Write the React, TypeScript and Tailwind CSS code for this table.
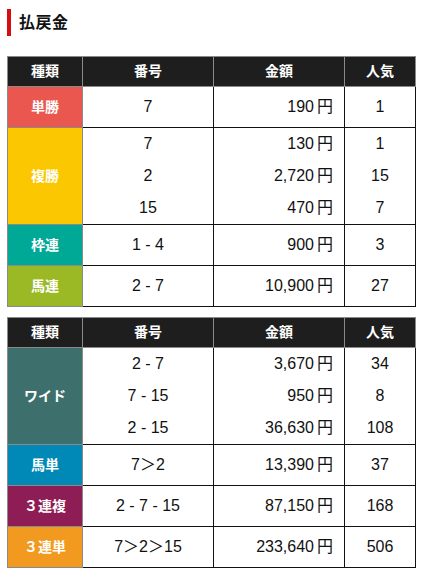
const tables = [
  [
    { label: "単勝", color: "bg-[#e9574f]", rows: [["7", "190", "1"]] },
    { label: "複勝", color: "bg-[#fbc700]", rows: [["7", "130", "1"], ["2", "2,720", "15"], ["15", "470", "7"]] },
    { label: "枠連", color: "bg-[#00a995]", rows: [["1 - 4", "900", "3"]] },
    { label: "馬連", color: "bg-[#9bb924]", rows: [["2 - 7", "10,900", "27"]] },
  ],
  [
    { label: "ワイド", color: "bg-[#3d706d]", rows: [["2 - 7", "3,670", "34"], ["7 - 15", "950", "8"], ["2 - 15", "36,630", "108"]] },
    { label: "馬単", color: "bg-[#0089b7]", rows: [["7＞2", "13,390", "37"]] },
    { label: "３連複", color: "bg-[#8e1d55]", rows: [["2 - 7 - 15", "87,150", "168"]] },
    { label: "３連単", color: "bg-[#f29a20]", rows: [["7＞2＞15", "233,640", "506"]] },
  ],
];

type Bet = { label: string; color: string; rows: string[][] };

function Lines({ bet, col }: { bet: Bet; col: number }) {
  const multi = bet.rows.length > 1;
  return (
    <div className="flex flex-col border-r border-b border-[#111]">
      {bet.rows.map((r, i) => (
        <div
          key={i}
          className={`flex items-center ${multi ? "h-[32px]" : "h-[40px]"} ${
            col === 1 ? "justify-end pr-[11px]" : "justify-center"
          }`}
        >
          {r[col]}
          {col === 1 && <span className="ml-[3px]">円</span>}
        </div>
      ))}
    </div>
  );
}

function PayTable({ bets }: { bets: Bet[] }) {
  return (
    <div className="grid grid-cols-[76px_131px_131px_71px] w-[409px] text-[16px] text-[#111]">
      {["種類", "番号", "金額", "人気"].map((h, i) => (
        <div
          key={h}
          className={`h-[31px] flex items-center justify-center bg-[#1e1e1e] text-white font-bold text-[14px] border-t border-r border-b border-[#8a8a8a] ${
            i === 0 ? "border-l" : ""
          }`}
        >
          {h}
        </div>
      ))}
      {bets.map((b) => (
        <div key={b.label} className="contents">
          <div
            className={`${b.color} flex items-center justify-center text-white font-bold text-[14px] border-l border-r border-b border-[#8a8a8a]`}
          >
            {b.label}
          </div>
          <Lines bet={b} col={0} />
          <Lines bet={b} col={1} />
          <Lines bet={b} col={2} />
        </div>
      ))}
    </div>
  );
}

export default function App() {
  return (
    <div
      className="w-[423px] h-[574px] bg-white pl-[7px] pt-[9px]"
      style={{ fontFamily: '"Liberation Sans", "Noto Sans CJK JP", sans-serif' }}
    >
      <div className="flex items-center gap-[8px] h-[27px]">
        <div className="w-[4px] h-[27px] bg-[#d50f0f]" />
        <h2 className="text-[16px] font-bold text-[#111] tracking-[0.5px]">払戻金</h2>
      </div>
      <div className="mt-[20px]">
        <PayTable bets={tables[0]} />
      </div>
      <div className="mt-[10px]">
        <PayTable bets={tables[1]} />
      </div>
    </div>
  );
}
